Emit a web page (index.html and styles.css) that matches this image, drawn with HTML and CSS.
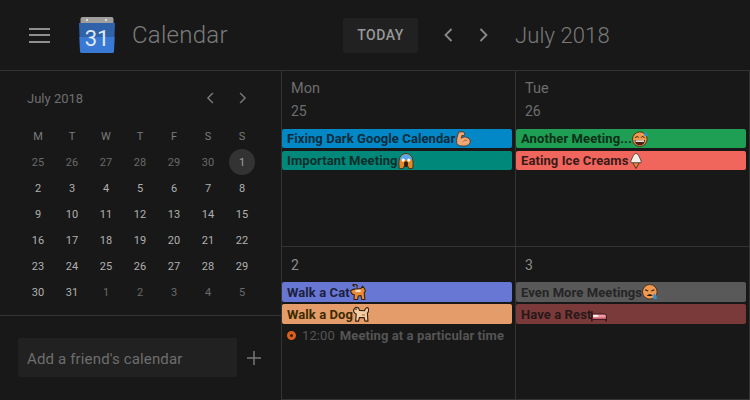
FILE: index.html
```html
<!DOCTYPE html>
<html lang="en">
<head>
  <meta charset="UTF-8">
  <title>Calendar</title>
  <link rel="stylesheet" href="styles.css">
</head>
<body>
  <svg class="defs" width="0" height="0">
    <symbol id="chev-left" viewBox="0 0 12 14"><path d="M9.500 1 3.500 7l6 6" fill="none" stroke="currentColor" stroke-width="1.800"/></symbol>
    <symbol id="chev-right" viewBox="0 0 12 14"><path d="M2.500 1l6 6-6 6" fill="none" stroke="currentColor" stroke-width="1.800"/></symbol>
    <symbol id="muscle" viewBox="0 0 18 18"><path d="M4.500 1 9.500.8l1.500 2.400-1 1.800-2.300.2-.6 3c1.800-1.600 4.400-2 6-1 2.200.3 4 2 4 4.500 0 3.300-3.300 5.300-7.500 5.300-3.300 0-6.500-.6-7.500-2.800C1.200 10 2.500 5 4.500 1z" fill="#f0a878" stroke="#5a3015" stroke-width="1"/><path d="M9 12c1-1.500 3-2 4.500-1.500" fill="none" stroke="#a8602c" stroke-width="1"/></symbol>
    <symbol id="scream" viewBox="0 0 18 18"><path d="M1.500 17.500C.5 10 .5 1.500 9 .5c8.500 1 8.500 9.500 7.500 17h-4.300l-1-2.500H6.800l-1 2.500z" fill="#e08a2c" stroke="#4a2a10" stroke-width="1"/><path d="M2.500 7.500c0-4.500 3.500-6 6.500-6s6.500 1.500 6.500 6z" fill="#5aa9e6"/><ellipse cx="5.800" cy="8" rx="1.700" ry="1.900" fill="#fff"/><ellipse cx="12.200" cy="8" rx="1.700" ry="1.900" fill="#fff"/><ellipse cx="9" cy="12.500" rx="2.200" ry="3.200" fill="#33190a"/></symbol>
    <symbol id="sweat" viewBox="0 0 18 18"><circle cx="8.800" cy="9.200" r="8.200" fill="#ef9a50" stroke="#4a2a10" stroke-width="1"/><path d="M3.500 7.500 6.200 6l1.200 1.500M10.300 7.500l1.200-1.500 2.700 1.500" fill="none" stroke="#33190a" stroke-width="1.100"/><path d="M3 10h11.600c0 3.800-2.800 6-5.800 6S3 13.800 3 10z" fill="#4a1f10"/><path d="M4 10.500h9.600v1.700H4z" fill="#fff"/><path d="M15 .5c1.500 2 2.800 3.200 2.300 4.600-.5 1.100-3 1.100-3.400-.2-.3-1.100.5-2.800 1.100-4.400z" fill="#2a8fd8"/></symbol>
    <symbol id="icecream" viewBox="0 0 14 18"><path d="M3.200 10.500 7 17.500l3.800-7z" fill="#e8893a" stroke="#4a2a10" stroke-width="1"/><path d="M1.500 11C.3 8.500 2.500 7 3 5 4 2 6 .5 7 .5S10 2 11 5c.5 2 2.700 3.500 1.500 6z" fill="#f3efe8" stroke="#4a3a30" stroke-width="1"/></symbol>
    <symbol id="cat" viewBox="0 0 18 18"><path d="M5.500 2.500C3 2 2 .8 4.500.5c3-.3 4.500 1.500 3 3.500" fill="none" stroke="#3a2008" stroke-width="1.300"/><path d="M.8 7.500c2-2 4.500-2 6.500-2l5-.5 1.800-2.500 2.200 2.500 1 3-1.300 2 .8 7.500h-3.500l-1-4.500-3 .5-.8 4H4.500l.3-5.500C2.500 12 1 10 .8 7.500z" fill="#e98a34" stroke="#3a2008" stroke-width="1.200"/><path d="M6 6.500h6v2.500H6z" fill="#f6e3c8"/></symbol>
    <symbol id="dog" viewBox="0 0 18 18"><path d="M.8 4 3 1.500 6 2l1.500 3 5.500.3c.5-2.500 3-4.300 4-3 1 1.500.7 4.500-.8 5.700l.6 9h-3.300l-1-4H7.200l-1 4H3l.6-8C1.500 8.500.3 6 .8 4z" fill="#f0cfa8" stroke="#3a2008" stroke-width="1.300"/><path d="M10 9h3.500v2H10z" fill="#d09060"/><circle cx="3.500" cy="4" r=".8" fill="#3a2008"/></symbol>
    <symbol id="cry" viewBox="0 0 18 18"><circle cx="8.800" cy="8.800" r="8.200" fill="#ef9a50" stroke="#4a2a10" stroke-width="1"/><path d="M3.500 6.500 7 8M14 6.500 10.500 8" fill="none" stroke="#33190a" stroke-width="1.200"/><path d="M5.500 13.500c1-2.800 5.500-2.800 6.500 0z" fill="#33190a"/><path d="M13.500 10.500c1.500 2 4 3.700 3.200 5.800-.8 1.500-3.700 1.200-4-.4-.3-1.500.3-3.500.8-5.400z" fill="#2a8fd8"/></symbol>
    <symbol id="bed" viewBox="0 0 18 18"><path d="M1 5.500V17.500M17 13v4.500" fill="none" stroke="#2d1414" stroke-width="1.600"/><path d="M1.500 9h13.300c1.400 0 2.400.9 2.400 2.200V15H1.500z" fill="#f09aa6" stroke="#2d1414" stroke-width="1.100"/><path d="M2.500 10h5.500v2.300H2.500z" fill="#f7f2ea"/><path d="M2 13h14.500v1.500H2z" fill="#c9566a"/></symbol>
  </svg>

  <header class="topbar">
    <div class="menu-icon"><span></span><span></span><span></span></div>
    <svg class="logo" viewBox="0 0 36 36" width="36" height="36">
      <rect x="1.500" y="0" width="33" height="10" rx="2" fill="#9e9e9e"/>
      <circle cx="8" cy="3" r="1.200" fill="#dcdcdc"/>
      <circle cx="27" cy="3" r="1.200" fill="#dcdcdc"/>
      <path d="M0 6h36l-1 28a2 2 0 0 1-2 2H3a2 2 0 0 1-2-2z" fill="#2f62a8"/>
      <path d="M.5 20h35l-.5 14a2 2 0 0 1-2 2H3a2 2 0 0 1-2-2z" fill="#3a78d6"/>
      <text x="18" y="29" text-anchor="middle" class="logo-num">31</text>
    </svg>
    <span class="app-name">Calendar</span>
    <button class="today">TODAY</button>
    <svg class="nav-chev"><use href="#chev-left"/></svg>
    <svg class="nav-chev next"><use href="#chev-right"/></svg>
    <span class="range">July 2018</span>
  </header>

  <div class="content">
    <aside class="sidebar">
      <div class="mini">
        <div class="mini-head">
          <span class="mini-title">July 2018</span>
          <svg class="mini-chev"><use href="#chev-left"/></svg>
          <svg class="mini-chev second"><use href="#chev-right"/></svg>
        </div>
        <div class="mini-grid">
          <span class="dow">M</span><span class="dow">T</span><span class="dow">W</span><span class="dow">T</span><span class="dow">F</span><span class="dow">S</span><span class="dow">S</span>
          <span class="off">25</span><span class="off">26</span><span class="off">27</span><span class="off">28</span><span class="off">29</span><span class="off">30</span><span class="now"><b>1</b></span>
          <span>2</span><span>3</span><span>4</span><span>5</span><span>6</span><span>7</span><span>8</span>
          <span>9</span><span>10</span><span>11</span><span>12</span><span>13</span><span>14</span><span>15</span>
          <span>16</span><span>17</span><span>18</span><span>19</span><span>20</span><span>21</span><span>22</span>
          <span>23</span><span>24</span><span>25</span><span>26</span><span>27</span><span>28</span><span>29</span>
          <span>30</span><span>31</span><span class="off">1</span><span class="off">2</span><span class="off">3</span><span class="off">4</span><span class="off">5</span>
        </div>
      </div>
      <div class="friends">
        <div class="friend-input">Add a friend's calendar</div>
        <svg class="plus" viewBox="0 0 14 14" width="14" height="14"><path d="M7 0v14M0 7h14" stroke="currentColor" stroke-width="1.500"/></svg>
      </div>
    </aside>

    <main class="month">
      <section class="cell">
        <div class="dayname">Mon</div>
        <div class="daynum">25</div>
        <div class="events">
          <div class="event blue">Fixing Dark Google Calendar<svg class="emoji"><use href="#muscle"/></svg></div>
          <div class="event teal">Important Meeting<svg class="emoji"><use href="#scream"/></svg></div>
        </div>
      </section>
      <section class="cell">
        <div class="dayname">Tue</div>
        <div class="daynum">26</div>
        <div class="events">
          <div class="event green">Another Meeting...<svg class="emoji"><use href="#sweat"/></svg></div>
          <div class="event tomato">Eating Ice Creams<svg class="emoji"><use href="#icecream"/></svg></div>
        </div>
      </section>
      <section class="cell lower">
        <div class="daynum bright">2</div>
        <div class="events">
          <div class="event lavender">Walk a Cat<svg class="emoji"><use href="#cat"/></svg></div>
          <div class="event tangerine">Walk a Dog<svg class="emoji"><use href="#dog"/></svg></div>
          <div class="timed"><i class="dot"></i><span class="time">12:00</span><b>Meeting at a particular time</b></div>
        </div>
      </section>
      <section class="cell lower">
        <div class="daynum bright">3</div>
        <div class="events">
          <div class="event graphite">Even More Meetings<svg class="emoji"><use href="#cry"/></svg></div>
          <div class="event maroon">Have a Rest<svg class="emoji"><use href="#bed"/></svg></div>
        </div>
      </section>
    </main>
  </div>
</body>
</html>
```

FILE: styles.css
```css
* {
  box-sizing: border-box;
}
html, body {
  margin: 0;
  width: 750px;
  height: 400px;
  overflow: hidden;
}
body {
  background: #181818;
  color: #9a9a9a;
  font-family: Roboto, "Liberation Sans", sans-serif;
}
.defs {
  position: absolute;
}

/* top bar */
.topbar {
  display: flex;
  align-items: center;
  height: 71px;
  padding-left: 29px;
  border-bottom: 1px solid #333;
}
.menu-icon {
  display: flex;
  flex-direction: column;
  gap: 4.5px;
  width: 21px;
}
.menu-icon span {
  height: 2px;
  background: #8f8f8f;
}
.logo {
  margin-left: 29px;
}
.logo-num {
  font-size: 22px;
  fill: #dfe8f5;
}
.app-name {
  margin-left: 17px;
  width: 211px;
  font-size: 24px;
  font-weight: 300;
  letter-spacing: 0.25px;
  color: #7c7c7c;
}
.today {
  width: 75px;
  height: 35px;
  border: none;
  border-radius: 2px;
  background: #212121;
  color: #989898;
  font: 500 14px Roboto, sans-serif;
  letter-spacing: 0.5px;
}
.nav-chev {
  width: 12px;
  height: 14px;
  margin-left: 24px;
  color: #8a8a8a;
}
.range {
  margin-left: 25px;
  font-size: 22px;
  font-weight: 300;
  letter-spacing: 0.1px;
  color: #7a7a7a;
}

.content {
  display: flex;
  height: 329px;
}

/* left column */
.sidebar {
  width: 282px;
  border-right: 1px solid #333;
}
.mini {
  height: 245px;
  padding: 18px 21px 0;
  border-bottom: 1px solid #333;
}
.mini-head {
  display: flex;
  align-items: center;
  height: 18px;
  padding-left: 6px;
}
.mini-title {
  width: 178px;
  font-size: 13px;
  color: #6f6f6f;
}
.mini-chev {
  width: 10px;
  height: 12px;
  color: #777;
}
.mini-chev.second {
  margin-left: 23px;
}
.mini-grid {
  display: grid;
  grid-template-columns: repeat(7, 34px);
  grid-auto-rows: 26px;
  margin-top: 16px;
  font-size: 11px;
  color: #b0b0b0;
}
.mini-grid span {
  display: flex;
  align-items: center;
  justify-content: center;
}
.mini-grid .dow {
  color: #7c7c7c;
}
.mini-grid .off {
  color: #6a6a6a;
}
.mini-grid .now b {
  display: flex;
  align-items: center;
  justify-content: center;
  width: 26px;
  height: 26px;
  border-radius: 50%;
  background: #333;
  color: #a0a0a0;
  font-weight: 400;
}
.friends {
  display: flex;
  align-items: center;
  padding: 22px 0 0 18px;
}
.friend-input {
  width: 219px;
  height: 39px;
  padding: 0 9px;
  line-height: 43px;
  border-radius: 2px;
  background: #212121;
  font-size: 15px;
  letter-spacing: 0.15px;
  color: #6e6e6e;
}
.plus {
  margin-left: 10px;
  color: #777;
}

/* month grid */
.month {
  display: grid;
  grid-template-columns: 234px 234px;
  grid-template-rows: 176px 153px;
}
.cell {
  border-right: 1px solid #333;
  border-bottom: 1px solid #333;
}
.dayname {
  padding: 9px 0 0 9px;
  height: 29px;
  font-size: 14.5px;
  color: #6e6e6e;
}
.daynum {
  padding-left: 9px;
  height: 29px;
  font-size: 14px;
  line-height: 22px;
  color: #6e6e6e;
}
.lower .daynum {
  height: 35px;
  padding-top: 7px;
}
.daynum.bright {
  color: #8c8c8c;
}
.events {
  display: flex;
  flex-direction: column;
  gap: 3px;
  width: 230px;
}
.lower .events {
  gap: 2px;
}
.event {
  display: flex;
  align-items: center;
  height: 19px;
  padding-left: 5px;
  border-radius: 2px;
  font-size: 13px;
  font-weight: 700;
  letter-spacing: 0.09px;
  white-space: nowrap;
}
.lower .event {
  height: 20px;
}
.emoji {
  flex: none;
  width: 16px;
  height: 16px;
}
.blue { background: #0288c6; color: #0c2c3c; }
.teal { background: #00897b; color: #0c2e2a; }
.green { background: #1f9f53; color: #0a3019; }
.tomato { background: #f1665c; color: #3a1a18; }
.lavender { background: #6877d3; color: #1c2140; }
.tangerine { background: #e59c6b; color: #3d2a00; }
.graphite { background: #595959; color: #252525; }
.maroon { background: #7b3a3a; color: #281818; }
.timed {
  display: flex;
  align-items: center;
  height: 18px;
  padding-left: 5px;
  font-size: 13px;
  letter-spacing: 0.09px;
  color: #555;
}
.dot {
  width: 9px;
  height: 9px;
  margin-right: 6px;
  border-radius: 50%;
  border: 3px solid #d8601c;
  background: #3a1d0a;
}
.time {
  margin-right: 5px;
}
.timed b {
  font-weight: 700;
}
```
